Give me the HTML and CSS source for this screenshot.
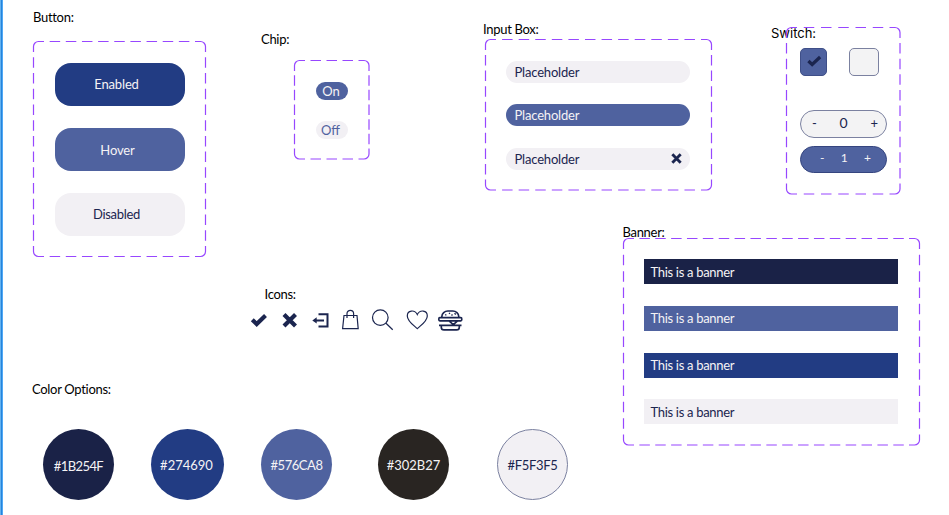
FILE: index.html
```
<!DOCTYPE html>
<html lang="en">
<head>
<meta charset="utf-8">
<title>Component sheet</title>
<link rel="stylesheet" href="styles.css">
</head>
<body>
<main class="canvas">
  <h2 class="label label-button">Button:</h2>
  <section class="frame frame-button">
    <svg class="outline">
      <path d="M.5 11V5.500a5 5 0 0 1 5-5H11M162 .5h5.500a5 5 0 0 1 5 5V11M172.500 205v5.500a5 5 0 0 1-5 5H162M11 215.500H5.500a5 5 0 0 1-5-5V205"/>
      <path stroke-dasharray="0 5.650 10.500 0" d="M11 .5H162M11 215.500H162"/>
      <path stroke-dasharray="0 5.230 10.500 0" d="M.5 11V205M172.500 11V205"/>
    </svg>
    <div class="btn enabled"><span>Enabled</span></div>
    <div class="btn hover"><span>Hover</span></div>
    <div class="btn disabled"><span>Disabled</span></div>
  </section>

  <h2 class="label label-chip">Chip:</h2>
  <section class="frame frame-chip">
    <svg class="outline">
      <path d="M.5 11V5.500a5 5 0 0 1 5-5H11M64.500 .5h5.500a5 5 0 0 1 5 5V11M75 88.500v5.500a5 5 0 0 1-5 5H64.500M11 99H5.500a5 5 0 0 1-5-5V88.500"/>
      <path stroke-dasharray="0 5.500 10.500 0" d="M11 .5H64.500M11 99H64.500"/>
      <path stroke-dasharray="0 4.170 10.500 0" d="M.5 11V88.500M75 11V88.500"/>
    </svg>
    <div class="chip on">On</div>
    <div class="chip off">Off</div>
  </section>

  <h2 class="label label-input">Input Box:</h2>
  <section class="frame frame-input">
    <svg class="outline">
      <path d="M.5 11V5.500a5 5 0 0 1 5-5H11M216 .5h5.500a5 5 0 0 1 5 5V11M226.500 140.500v5.500a5 5 0 0 1-5 5H216M11 151H5.500a5 5 0 0 1-5-5V140.500"/>
      <path stroke-dasharray="0 6.080 10.500 0" d="M11 .5H216M11 151H216"/>
      <path stroke-dasharray="0 5.060 10.500 0" d="M.5 11V140.500M226.500 11V140.500"/>
    </svg>
    <div class="field"><span>Placeholder</span></div>
    <div class="field active"><span>Placeholder</span></div>
    <div class="field"><span>Placeholder</span><svg class="clear" viewBox="0 0 10 10"><path d="M1.200 1.200l7.600 7.600M8.800 1.200L1.200 8.800"/></svg></div>
  </section>

  <h2 class="label label-switch">Switch:</h2>
  <section class="frame frame-switch">
    <svg class="outline">
      <path d="M.5 11V5.500a5 5 0 0 1 5-5H11M103.500 .5h5.500a5 5 0 0 1 5 5V11M114 156.500v5.500a5 5 0 0 1-5 5H103.500M11 167H5.500a5 5 0 0 1-5-5V156.500"/>
      <path stroke-dasharray="0 6.750 10.500 0" d="M11 .5H103.500M11 167H103.500"/>
      <path stroke-dasharray="0 5.100 10.500 0" d="M.5 11V156.500M114 11V156.500"/>
    </svg>
    <div class="checks">
      <div class="check checked"><svg viewBox="0 0 16 12"><path d="M1.500 6l4 3.800L14 1.800"/></svg></div>
      <div class="check empty"></div>
    </div>
    <div class="stepper"><span>-</span><span class="count">0</span><span>+</span></div>
    <div class="stepper filled"><span>-</span><span class="count">1</span><span>+</span></div>
  </section>

  <h2 class="label label-banner">Banner:</h2>
  <section class="frame frame-banner">
    <svg class="outline">
      <path d="M.5 11V5.500a5 5 0 0 1 5-5H11M286 .5h5.500a5 5 0 0 1 5 5V11M296.500 196.500v5.500a5 5 0 0 1-5 5H286M11 207H5.500a5 5 0 0 1-5-5V196.500"/>
      <path stroke-dasharray="0 5.370 10.500 0" d="M11 .5H286M11 207H286"/>
      <path stroke-dasharray="0 5.830 10.500 0" d="M.5 11V196.500M296.500 11V196.500"/>
    </svg>
    <div class="banner navy"><span>This is a banner</span></div>
    <div class="banner slate"><span>This is a banner</span></div>
    <div class="banner royal"><span>This is a banner</span></div>
    <div class="banner pale"><span>This is a banner</span></div>
  </section>

  <h2 class="label label-icons">Icons:</h2>
  <svg class="icons" viewBox="245 305 225 30">
    <path class="heavy" d="M252.300 319.800l4.400 4.200 8.800-8.400"/>
    <path class="heavy" d="M284 314.500l11.500 11.500M295.500 314.500L284 326"/>
    <path class="medium" d="M318.500 314.300h9v12.300h-9M324 320.400h-9"/>
    <path class="solid" d="M312.300 320.400l4.400-3.200v6.400z"/>
    <path class="thin" d="M344 315.500h13l1.200 13.200h-15.600zM347 318v-4.400a3.200 3.200 0 0 1 6.600 0v4.400"/>
    <circle class="thin" cx="380.300" cy="317.600" r="7.800"/>
    <path class="thin" d="M386 323.300l6.700 6.500"/>
    <path class="thin" d="M417.300 328.600c-4-3.600-10-7.500-10-12.700 0-6 7.500-6.500 10-1.300 2.500-5.200 10-4.700 10 1.300 0 5.200-6 9.100-10 12.700z"/>
    <path class="burger" d="M441.800 317.500v-.8c0-3.500 3-5.700 6-5.700h5c3 0 6 2.200 6 5.700v.8M439.800 317.700h21q1 0 1 1.600t-1 1.600h-21q-1 0-1-1.600t1-1.600zM449.300 321.200l4 3.400 4-3.400M439 325.400h22.500M441.300 325.400v1.800q0 2.700 2.700 2.700h12.600q2.700 0 2.700-2.700v-1.800"/>
    <path class="seeds" d="M445.300 315.300l1-.9M449 313l1 .8M451.500 315.400l1-.9M454.500 313.300l1.300 1.200"/>
  </svg>

  <h2 class="label label-colors">Color Options:</h2>
  <section class="swatches">
    <div class="swatch s1"><span>#1B254F</span></div>
    <div class="swatch s2"><span>#274690</span></div>
    <div class="swatch s3"><span>#576CA8</span></div>
    <div class="swatch s4"><span>#302B27</span></div>
    <div class="swatch s5"><span>#F5F3F5</span></div>
  </section>
</main>
</body>
</html>
```
FILE: styles.css
```
* { box-sizing: border-box; }
body { margin: 0; background: #fff; }
.canvas {
  position: relative;
  width: 949px;
  height: 515px;
  overflow: hidden;
  background: linear-gradient(90deg, #64b1ee 1px, #2584dc 1px 2px, #4fa8f5 2px 3px, #fff 3px);
  font: 13px/16px Lato, "Open Sans", sans-serif;
  color: #1b254f;
}
/* Items placed on the free canvas */
.label, .frame, .icons, .swatches { position: absolute; margin: 0; }
.label { font-size: 13px; font-weight: 400; color: #000; white-space: nowrap; letter-spacing: -.3px; }
.label-button { left: 33px; top: 9px; }
.label-chip { left: 261px; top: 31px; }
.label-input { left: 483px; top: 21px; }
.label-switch { left: 771px; top: 25px; font-family: Inter, sans-serif; letter-spacing: 0; }
.label-banner { left: 622.500px; top: 224px; }
.label-icons { left: 264.500px; top: 286px; }
.label-colors { left: 32px; top: 381px; }

.frame { display: flex; flex-direction: column; align-items: center; }
.outline { position: absolute; inset: 0; width: 100%; height: 100%; overflow: visible; fill: none; stroke: #9747ff; stroke-width: 1.200; }

.frame-button { left: 33px; top: 41px; width: 173px; height: 216px; padding: 21.500px 0 0 1px; gap: 21.500px; }
.btn { width: 130px; height: 43.500px; border-radius: 16px; display: flex; align-items: center; justify-content: center; padding-right: 7px; letter-spacing: -.15px; }
.enabled { background: #223c83; color: #f5f3f5; }
.hover { background: #4f629f; color: #f5f3f5; padding: 2px 5px 0 0; }
.disabled { background: #f2f0f4; letter-spacing: -.3px; }

.frame-chip { left: 294px; top: 60px; width: 76px; height: 100px; padding-top: 22px; gap: 21px; }
.chip { width: 32px; height: 18px; border-radius: 9px; text-align: center; line-height: 18px; }
.on { background: #4f629f; color: #f5f3f5; padding-right: 2px; }
.off { background: #f2f0f4; color: #4f629f; padding-right: 3px; }

.frame-input { left: 485px; top: 39px; width: 227px; height: 152px; padding: 22px 1px 0 0; gap: 21.400px; }
.field { width: 184px; height: 22px; border-radius: 11px; background: #f2f0f4; display: flex; align-items: center; justify-content: space-between; padding: 0 8px 0 8.500px; letter-spacing: -.18px; }
.active { background: #4f629f; color: #f5f3f5; }
.clear { width: 11px; height: 11px; fill: none; stroke: #1b254f; stroke-width: 2.600; }

.frame-switch { left: 786px; top: 27px; width: 115px; height: 168px; padding: 21px 14px; align-items: flex-start; }
.checks { display: flex; gap: 22px; margin-bottom: 34px; }
.check { height: 28px; border-radius: 5px; border: 1px solid #7b81a0; display: flex; align-items: center; justify-content: center; }
.checked { width: 27px; background: #4f629f; border-color: #3f4f88; }
.checked svg { width: 15px; height: 12px; margin: 0 0 2px 2px; fill: none; stroke: #1b254f; stroke-width: 3.500; }
.empty { width: 30px; background: #f3f3f4; }
.stepper { flex: none; width: 87px; height: 27.500px; border: 1px solid #7b81a0; border-radius: 14px; background: #f3f3f4; display: flex; justify-content: space-between; align-items: center; padding: 0 8px 1px 11px; margin-bottom: 8px; }
.stepper span { font-size: 13px; }
.stepper .count { font-size: 14px; }
.filled { background: #4f629f; border-color: #35457f; color: #f5f3f5; padding: 0 15px 2px 19px; }
.filled span, .filled .count { font-size: 12px; }

.frame-banner { left: 623px; top: 238px; width: 297px; height: 207px; padding: 21.400px 1px 0 0; gap: 21.600px; }
.banner { width: 254px; height: 25px; display: flex; align-items: center; padding-left: 6.500px; color: #f5f3f5; letter-spacing: -.31px; }
.navy { background: #1a2247; }
.slate { background: #4f629f; }
.royal { background: #223c83; }
.pale { background: #f2f0f4; color: #1b254f; }

.icons { left: 245px; top: 305px; width: 225px; height: 30px; fill: none; stroke: #1b254f; }
.heavy { stroke-width: 4.200; }
.medium { stroke-width: 2; }
.thin { stroke-width: 1.200; }
.solid { fill: #1b254f; stroke: none; }
.burger { stroke-width: 1.700; }
.seeds { stroke-width: 1.400; }

.swatches { left: 43px; top: 429px; display: flex; }
.swatch { width: 71px; height: 71px; border-radius: 50%; display: flex; align-items: center; justify-content: center; color: #f5f3f5; }
.s1 { background: #1a2247; letter-spacing: -.6px; padding-top: 2px; }
.s2 { background: #223c83; width: 73px; margin-left: 37px; padding-right: 2px; }
.s3 { background: #4f629f; margin-left: 37px; letter-spacing: -.45px; }
.s4 { background: #292522; margin-left: 46px; }
.s5 { background: #f2f0f4; margin-left: 48px; border: 1px solid #7b81a0; color: #1b254f; letter-spacing: -.3px; }
```
